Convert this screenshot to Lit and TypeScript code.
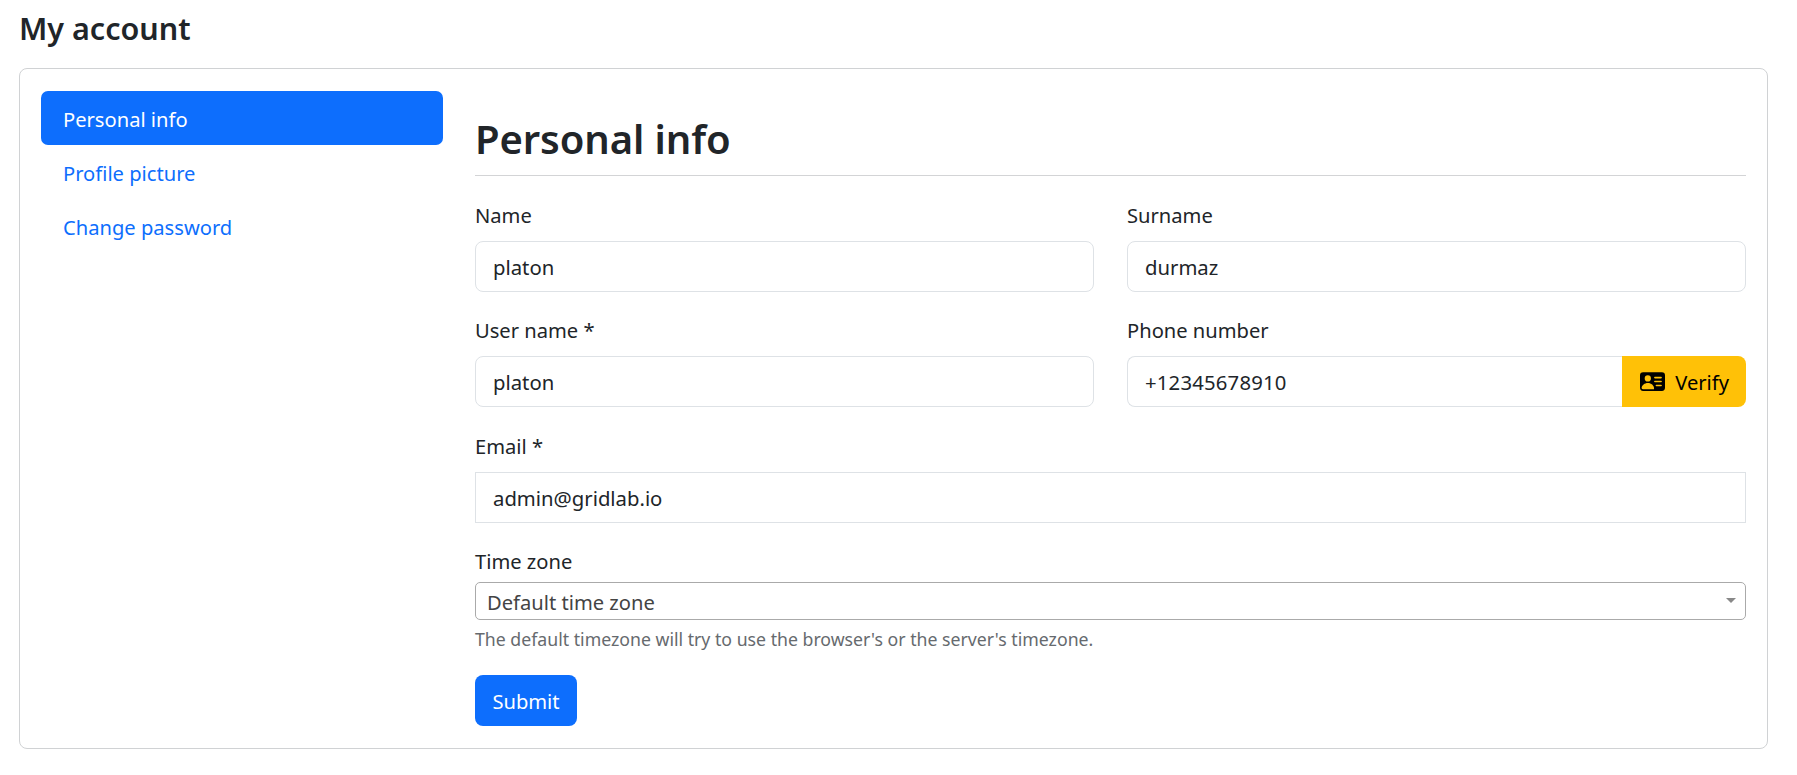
import { LitElement, html, css } from "lit";
import { customElement } from "lit/decorators.js";

@customElement("app-root")
export class AppRoot extends LitElement {
  static styles = css`
    :host { display: block; font-family: "Noto Sans", sans-serif; font-size: 20.15px; line-height: 30px; color: #212529; background: #fff; min-height: 775px; }
    * { box-sizing: border-box; }
    .page { padding: 6px 29px 0 19px; }
    h4 { margin: 0 0 15px 0; font-size: 30.5px; line-height: 44px; font-weight: 600; height: 47px; }
    .card { border: 1px solid #d0d2d4; border-radius: 8px; padding: 22px 21px; display: grid; grid-template-columns: 402px 1fr; column-gap: 32px; height: 681px; }
    .nav { display: flex; flex-direction: column; }
    .nav a { height: 54px; padding: 13px 22px; color: #0d6efd; border-radius: 7px; }
    .nav a.active { background: #0d6efd; color: #fff; }
    h2 { margin: 0; font-size: 40px; line-height: 60px; font-weight: 600; letter-spacing: -0.1px; padding-top: 18px; height: 85px; border-bottom: 1px solid #d3d4d6; }
    .main { display: flex; flex-direction: column; }
    .grid { display: grid; grid-template-columns: 1fr 1fr; column-gap: 33px; margin-top: 24px; }
    .field { height: 115px; }
    .field.tall { height: 116px; }
    .field.wide { grid-column: 1 / -1; }
    label { display: block; height: 30px; margin-bottom: 11px; }
    .control { height: 51px; border: 1px solid #dee2e6; border-radius: 8px; padding: 10px 17px; display: block; width: 100%; font: inherit; font-size: 20.3px; color: #212529; background: #fff; outline: none; }
    .control.square { border-radius: 0; }
    .control.phone { letter-spacing: 0.2px; }
    .group { display: flex; }
    .group .control { border-radius: 8px 0 0 8px; border-right: 0; flex: 1; min-width: 0; }
    .verify { display: inline-flex; align-items: center; gap: 10px; height: 51px; padding: 0 17px 0 18px; background: #ffc107; border: 0; border-radius: 0 8px 8px 0; font: inherit; color: #000; }
    .verify svg { width: 25px; height: 25px; display: block; }
    .zone label { margin-bottom: 6px; }
    .select { height: 38px; border: 1px solid #aaa; border-radius: 5px; padding: 1px 11px 0; line-height: 37px; color: #444; position: relative; background: #fff; }
    .select::after { content: ""; position: absolute; right: 9px; top: 15px; border: 5px solid transparent; border-top-color: #888; border-bottom: 0; }
    .help { font-size: 17.7px; line-height: 26px; color: #666a6e; margin-top: 6px; }
    .submit { align-self: flex-start; height: 51px; width: 102px; margin-top: 23px; padding: 0; background: #0d6efd; color: #fff; border: 0; border-radius: 8px; font: inherit; }
  `;

  render() {
    return html`
      <div class="page">
        <h4>My account</h4>
        <div class="card">
          <nav class="nav">
            <a class="active">Personal info</a>
            <a>Profile picture</a>
            <a>Change password</a>
          </nav>
          <div class="main">
            <h2>Personal info</h2>
            <div class="grid">
              <div class="field"><label>Name</label><input class="control" value="platon" /></div>
              <div class="field"><label>Surname</label><input class="control" value="durmaz" /></div>
              <div class="field tall"><label>User name *</label><input class="control" value="platon" /></div>
              <div class="field tall">
                <label>Phone number</label>
                <div class="group">
                  <input class="control phone" value="+12345678910" />
                  <button class="verify">
                    <svg viewBox="0 0 16 16" fill="currentColor"><path d="M0 4a2 2 0 0 1 2-2h12a2 2 0 0 1 2 2v8a2 2 0 0 1-2 2H2a2 2 0 0 1-2-2V4Zm9 1.5a.5.5 0 0 0 .5.5h4a.5.5 0 0 0 0-1h-4a.5.5 0 0 0-.5.5ZM9 8a.5.5 0 0 0 .5.5h4a.5.5 0 0 0 0-1h-4A.5.5 0 0 0 9 8Zm1 2.5a.5.5 0 0 0 .5.5h3a.5.5 0 0 0 0-1h-3a.5.5 0 0 0-.5.5Zm-1 2C9 10.567 7.21 9 5 9c-2.086 0-3.8 1.398-3.984 3.181A1 1 0 0 0 2 13h6.96c.026-.163.04-.33.04-.5ZM7 6a2 2 0 1 0-4 0 2 2 0 0 0 4 0Z"/></svg>
                    Verify
                  </button>
                </div>
              </div>
              <div class="field wide"><label>Email *</label><input class="control square" value="admin@gridlab.io" /></div>
            </div>
            <div class="zone">
              <label>Time zone</label>
              <div class="select">Default time zone</div>
              <div class="help">The default timezone will try to use the browser's or the server's timezone.</div>
            </div>
            <button class="submit">Submit</button>
          </div>
        </div>
      </div>
    `;
  }
}
